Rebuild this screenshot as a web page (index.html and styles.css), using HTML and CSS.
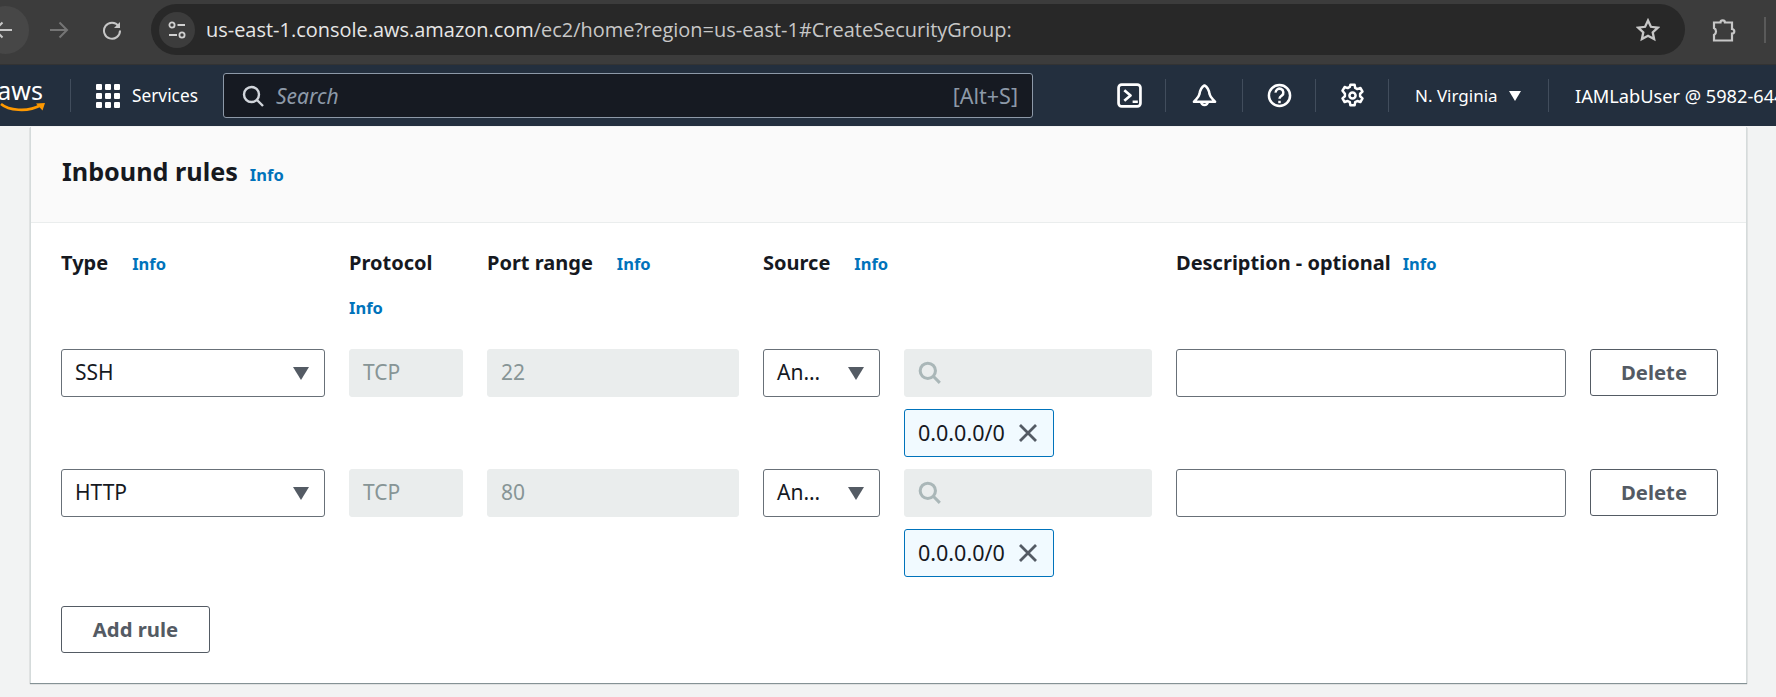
FILE: index.html
```html
<!DOCTYPE html>
<html lang="en">
<head>
<meta charset="utf-8">
<title>Create security group</title>
<link rel="stylesheet" href="styles.css">
</head>
<body>
<header class="browser">
  <span class="back-circle">
    <svg class="ico-arrow" viewBox="0 0 20 20"><path d="M19 10H2M9.500 2.500 2 10l7.500 7.500"/></svg>
  </span>
  <svg class="ico-forward" viewBox="0 0 20 20"><path d="M1 10h17M10.500 2.500 18 10l-7.500 7.500"/></svg>
  <svg class="ico-reload" viewBox="0 0 20 20"><path d="M16.600 6.200A8 8 0 1 0 18 10.500"/><path class="fill" d="M18 2v6h-6z"/></svg>
  <div class="omnibox">
    <span class="tune">
      <svg viewBox="0 0 20 20"><circle cx="5" cy="5" r="2.600"/><path d="M10.500 5H18M2 15h8"/><circle cx="15" cy="15" r="2.600"/></svg>
    </span>
    <span class="url"><span class="host">us-east-1.console.aws.amazon.com</span>/ec2/home?region=us-east-1#CreateSecurityGroup:</span>
    <svg class="ico-star" viewBox="0 0 24 24"><path d="M12 2.500l2.900 6.300 6.900.8-5.100 4.700 1.400 6.800-6.100-3.400-6.100 3.400 1.400-6.800L2.200 9.600l6.900-.8z"/></svg>
  </div>
  <svg class="ico-ext" viewBox="0 0 24 24"><path d="M2 4.500h6.500a2.200 2.200 0 0 1 4.400 0H20V11a2.300 2.300 0 0 1 0 4.600v6.900H2V17a4 4 0 0 0 2-3.500A4 4 0 0 0 2 10z"/></svg>
  <span class="browser-sep"></span>
</header>

<nav class="topnav">
  <div class="logo">
    <span class="logo-text">aws</span>
    <svg class="logo-smile" viewBox="0 0 46 12"><path class="smile" d="M1 2c7 6 26 9 40 1"/><path class="smile-tip" d="M36 1.500 45 1l-2.500 7.500z"/></svg>
  </div>
  <div class="services">
    <span class="dots"><i></i><i></i><i></i><i></i><i></i><i></i><i></i><i></i><i></i></span>
    <span class="services-label">Services</span>
  </div>
  <div class="search">
    <svg class="search-ico" viewBox="0 0 22 22"><circle cx="9.500" cy="9.500" r="7.500"/><path d="M15 15l6 6"/></svg>
    <span class="search-text">Search</span>
    <span class="search-key">[Alt+S]</span>
  </div>
  <div class="nav-cell cell-term">
    <svg class="nav-ico" viewBox="0 0 24 24"><rect x="1.500" y="1.500" width="21" height="21" rx="3"/><path d="M7 7l6 5-6 5M15 18h5"/></svg>
  </div>
  <div class="nav-cell cell-bell">
    <svg class="nav-ico" viewBox="0 0 26 26"><path d="M13 2.500C9.500 4.500 8.300 8 7.800 11.500 7.300 14.500 4.500 16.500 2 19.500h22c-2.500-3-5.300-5-5.800-8C17.700 8 16.500 4.500 13 2.500z"/><path d="M9.500 19.500a3.500 3.500 0 0 0 7 0"/></svg>
  </div>
  <div class="nav-cell cell-help">
    <svg class="nav-ico" viewBox="0 0 26 26"><circle cx="13" cy="13" r="11"/><path d="M9 10a4 4 0 1 1 6.500 3c-1.500 1.200-2.500 1.800-2.500 3.500"/><path d="M13 18.500v2.500"/></svg>
  </div>
  <div class="nav-cell cell-gear">
    <svg class="nav-ico" viewBox="0 0 26 26"><path d="M10.800 1.800h4.400l.6 3.300 2.200 1.200 3.200-1.100 2.200 3.800-2.500 2.200v2.600l2.500 2.200-2.200 3.800-3.200-1.100-2.200 1.200-.6 3.300h-4.400l-.6-3.300-2.200-1.200-3.200 1.100-2.200-3.800 2.500-2.200v-2.600L2.600 8l2.200-3.800L8 5.300l2.200-1.200z"/><circle cx="13" cy="13" r="3.200"/></svg>
  </div>
  <div class="nav-cell cell-region"><span>N. Virginia</span><i class="tri-white"></i></div>
  <div class="nav-user">IAMLabUser @ 5982-6441</div>
</nav>

<main class="page">
  <section class="card">
    <div class="card-head">
      <h2 class="card-title">Inbound rules</h2>
      <a class="info info-title">Info</a>
    </div>
    <div class="card-body">
      <div class="rule-grid rule-labels">
        <div class="lab"><span class="lab-text">Type</span><a class="info gap-type">Info</a></div>
        <div class="lab lab-stack"><span class="lab-text">Protocol</span><a class="info">Info</a></div>
        <div class="lab"><span class="lab-text">Port range</span><a class="info gap-port">Info</a></div>
        <div class="lab lab-source"><span class="lab-text">Source</span><a class="info gap-source">Info</a></div>
        <div class="lab"><span class="lab-text">Description - optional</span><a class="info gap-desc">Info</a></div>
      </div>

      <div class="rule-grid rule">
        <div class="field select"><span class="value">SSH</span><i class="tri"></i></div>
        <div class="field disabled">TCP</div>
        <div class="field disabled">22</div>
        <div class="field select"><span class="value">An…</span><i class="tri"></i></div>
        <div class="cidr">
          <div class="field disabled">
            <svg class="mini-search" viewBox="0 0 22 22"><circle cx="9" cy="9" r="7"/><path d="M14 14l6 6"/></svg>
          </div>
          <div class="chip"><span>0.0.0.0/0</span><svg class="chip-x" viewBox="0 0 20 20"><path d="M2 2l16 16M18 2 2 18"/></svg></div>
        </div>
        <div class="field"></div>
        <button class="btn btn-delete">Delete</button>
      </div>

      <div class="rule-grid rule">
        <div class="field select"><span class="value">HTTP</span><i class="tri"></i></div>
        <div class="field disabled">TCP</div>
        <div class="field disabled">80</div>
        <div class="field select"><span class="value">An…</span><i class="tri"></i></div>
        <div class="cidr">
          <div class="field disabled">
            <svg class="mini-search" viewBox="0 0 22 22"><circle cx="9" cy="9" r="7"/><path d="M14 14l6 6"/></svg>
          </div>
          <div class="chip"><span>0.0.0.0/0</span><svg class="chip-x" viewBox="0 0 20 20"><path d="M2 2l16 16M18 2 2 18"/></svg></div>
        </div>
        <div class="field"></div>
        <button class="btn btn-delete">Delete</button>
      </div>

      <button class="btn btn-add">Add rule</button>
    </div>
  </section>
</main>
</body>
</html>
```

FILE: styles.css
```css
* { box-sizing: border-box; }
html, body { margin: 0; height: 100%; }
body {
  width: 1776px;
  height: 697px;
  overflow: hidden;
  background: #f2f3f3;
  font-family: "Noto Sans", Roboto, sans-serif;
  color: #16191f;
}
svg { display: block; fill: none; flex: none; }

/* browser chrome */
.browser {
  display: flex;
  align-items: center;
  height: 65px;
  padding-bottom: 5px;
  background: #3c3c3c;
  border-bottom: 1px solid #333;
}
.back-circle {
  flex: none;
  display: flex;
  align-items: center;
  justify-content: flex-end;
  width: 47px;
  height: 48px;
  margin-left: -18px;
  padding-right: 16px;
  margin-right: 20px;
  border-radius: 24px;
  background: #474747;
}
.ico-arrow { width: 20px; height: 20px; stroke: #c7c7c7; stroke-width: 2; }
.ico-forward { width: 20px; height: 20px; stroke: #757575; stroke-width: 2; margin-right: 33px; }
.ico-reload { width: 20px; height: 20px; stroke: #c7c7c7; stroke-width: 2; margin-right: 29px; }
.ico-reload .fill { fill: #c7c7c7; stroke: none; }
.omnibox {
  display: flex;
  align-items: center;
  width: 1534px;
  height: 51px;
  padding: 0 25px 0 8px;
  border-radius: 26px;
  background: #282828;
}
.tune {
  flex: none;
  display: flex;
  align-items: center;
  justify-content: center;
  width: 36px;
  height: 36px;
  margin-right: 11px;
  border-radius: 50%;
  background: #3c3c3c;
}
.tune svg { width: 20px; height: 20px; stroke: #d0d0d0; stroke-width: 1.800; }
.url {
  flex: 1;
  font: 400 19.970px "Open Sans", sans-serif;
  color: #c7c7c7;
  white-space: nowrap;
}
.host { color: #e6e6e6; }
.ico-star { width: 24px; height: 24px; stroke: #c7c7c7; stroke-width: 2.300; }
.ico-ext { width: 24px; height: 24px; margin-left: 27px; stroke: #c7c7c7; stroke-width: 2.200; }
.browser-sep { width: 2px; height: 26px; margin-left: 28px; background: #5a5a5a; }

/* console nav */
.topnav {
  display: flex;
  align-items: center;
  height: 61px;
  background: #232f3e;
  color: #fff;
  white-space: nowrap;
  overflow: hidden;
}
.logo {
  flex: none;
  width: 71px;
  height: 33px;
  padding-right: 27px;
  border-right: 1px solid #414d5c;
  display: flex;
  flex-direction: column;
  align-items: flex-end;
}
.logo-text { font-size: 25px; line-height: 22px; color: #fff; }
.logo-smile { width: 46px; height: 12px; margin-right: -3px; margin-top: 1px; }
.smile { stroke: #f90; stroke-width: 2.600; }
.smile-tip { fill: #f90; }
.services { flex: none; display: flex; align-items: center; width: 152px; padding-left: 25px; }
.dots { display: grid; grid-template-columns: repeat(3, 6px); gap: 3px; margin-right: 12px; }
.dots i { width: 6px; height: 6px; border-radius: 1px; background: #fff; }
.services-label { font-size: 17.300px; }
.search {
  flex: none;
  display: flex;
  align-items: center;
  width: 810px;
  height: 45px;
  padding: 0 14px 0 18px;
  background: #161a22;
  border: 1px solid #8d99a8;
  border-radius: 3px;
}
.search-ico { width: 22px; height: 22px; stroke: #d1d5db; stroke-width: 2.400; margin-right: 12px; }
.search-text { flex: 1; font-size: 21px; font-style: italic; color: #8d99a8; }
.search-key { font-size: 21.500px; color: #8d99a8; }
.nav-cell {
  flex: none;
  display: flex;
  align-items: center;
  justify-content: center;
  height: 33px;
  border-right: 1px solid #414d5c;
  font-size: 17px;
}
.nav-ico { width: 25px; height: 25px; stroke: #fff; stroke-width: 2.600; stroke-linejoin: round; }
.cell-term { width: 109px; margin-left: 24px; padding-left: 61px; padding-right: 24px; }
.cell-bell { width: 77px; }
.cell-help, .cell-gear { width: 73px; }
.cell-region { width: 160px; justify-content: flex-start; padding-left: 26px; }
.tri-white {
  width: 0; height: 0; margin-left: 11px; margin-top: 1px;
  border-left: 6px solid transparent;
  border-right: 6px solid transparent;
  border-top: 10px solid #fff;
}
.nav-user { flex: none; padding-left: 26px; font-size: 18.200px; }

/* card */
.page { padding: 1px 29px 0 30px; }
.card {
  background: #fff;
  border-left: 1px solid #d5dbdb;
  border-right: 1px solid #d5dbdb;
  box-shadow: 0 1px 1px rgba(0, 28, 36, .45);
}
.card-head {
  display: flex;
  align-items: baseline;
  height: 96px;
  padding: 26px 30px 0 31px;
  background: #fafafa;
  border-bottom: 1px solid #eaeded;
}
.card-title { margin: 0; font-size: 25.200px; line-height: 36px; font-weight: 700; }
.info { font-size: 16.500px; font-weight: 700; color: #0073bb; line-height: 24px; }
.info-title { margin-left: 12px; }
.card-body { padding: 25px 30px 30px; }
.rule-grid {
  display: grid;
  grid-template-columns: 264px 114px 252px 117px 248px 390px 128px;
  column-gap: 24px;
}
.rule-labels { height: 101px; align-items: start; }
.lab { display: flex; align-items: baseline; line-height: 30px; white-space: nowrap; }
.lab-stack { flex-direction: column; row-gap: 18px; }
.lab-source { grid-column: span 2; }
.lab-text { font-size: 20px; font-weight: 700; }
.gap-type { margin-left: 24px; }
.gap-port { margin-left: 24px; }
.gap-source { margin-left: 24px; }
.gap-desc { margin-left: 12px; }
.rule { margin-bottom: 12px; align-items: start; }
.field {
  display: flex;
  align-items: center;
  height: 48px;
  padding: 0 13px 2px;
  border: 1px solid #687078;
  border-radius: 3px;
  background: #fff;
  font-size: 21px;
}
.field.disabled { border-color: #eaeded; background: #eaeded; color: #879596; }
.select { justify-content: space-between; padding-right: 15px; }
.value { color: #16191f; }
.tri {
  width: 0; height: 0; margin-top: 2px;
  border-left: 8px solid transparent;
  border-right: 8px solid transparent;
  border-top: 13px solid #545b64;
}
.cidr { display: flex; flex-direction: column; align-items: flex-start; row-gap: 12px; }
.cidr .field { width: 100%; padding-bottom: 0; }
.mini-search { width: 24px; height: 24px; stroke: #aab7b8; stroke-width: 2.800; }
.chip {
  display: flex;
  align-items: center;
  height: 48px;
  width: 150px;
  padding: 0 13px 2px;
  background: #f1faff;
  border: 1px solid #0073bb;
  border-radius: 3px;
  font-size: 21.500px;
}
.chip-x { width: 20px; height: 20px; margin-left: 13px; margin-top: 2px; stroke: #545b64; stroke-width: 2.800; }
.btn {
  display: block;
  padding: 0 0 2px;
  background: #fff;
  border: 1px solid #545b64;
  border-radius: 3px;
  font: 700 20.300px "Noto Sans", sans-serif;
  color: #545b64;
}
.btn-delete { height: 47px; }
.btn-add { width: 149px; height: 47px; margin-top: 29px; }
```
